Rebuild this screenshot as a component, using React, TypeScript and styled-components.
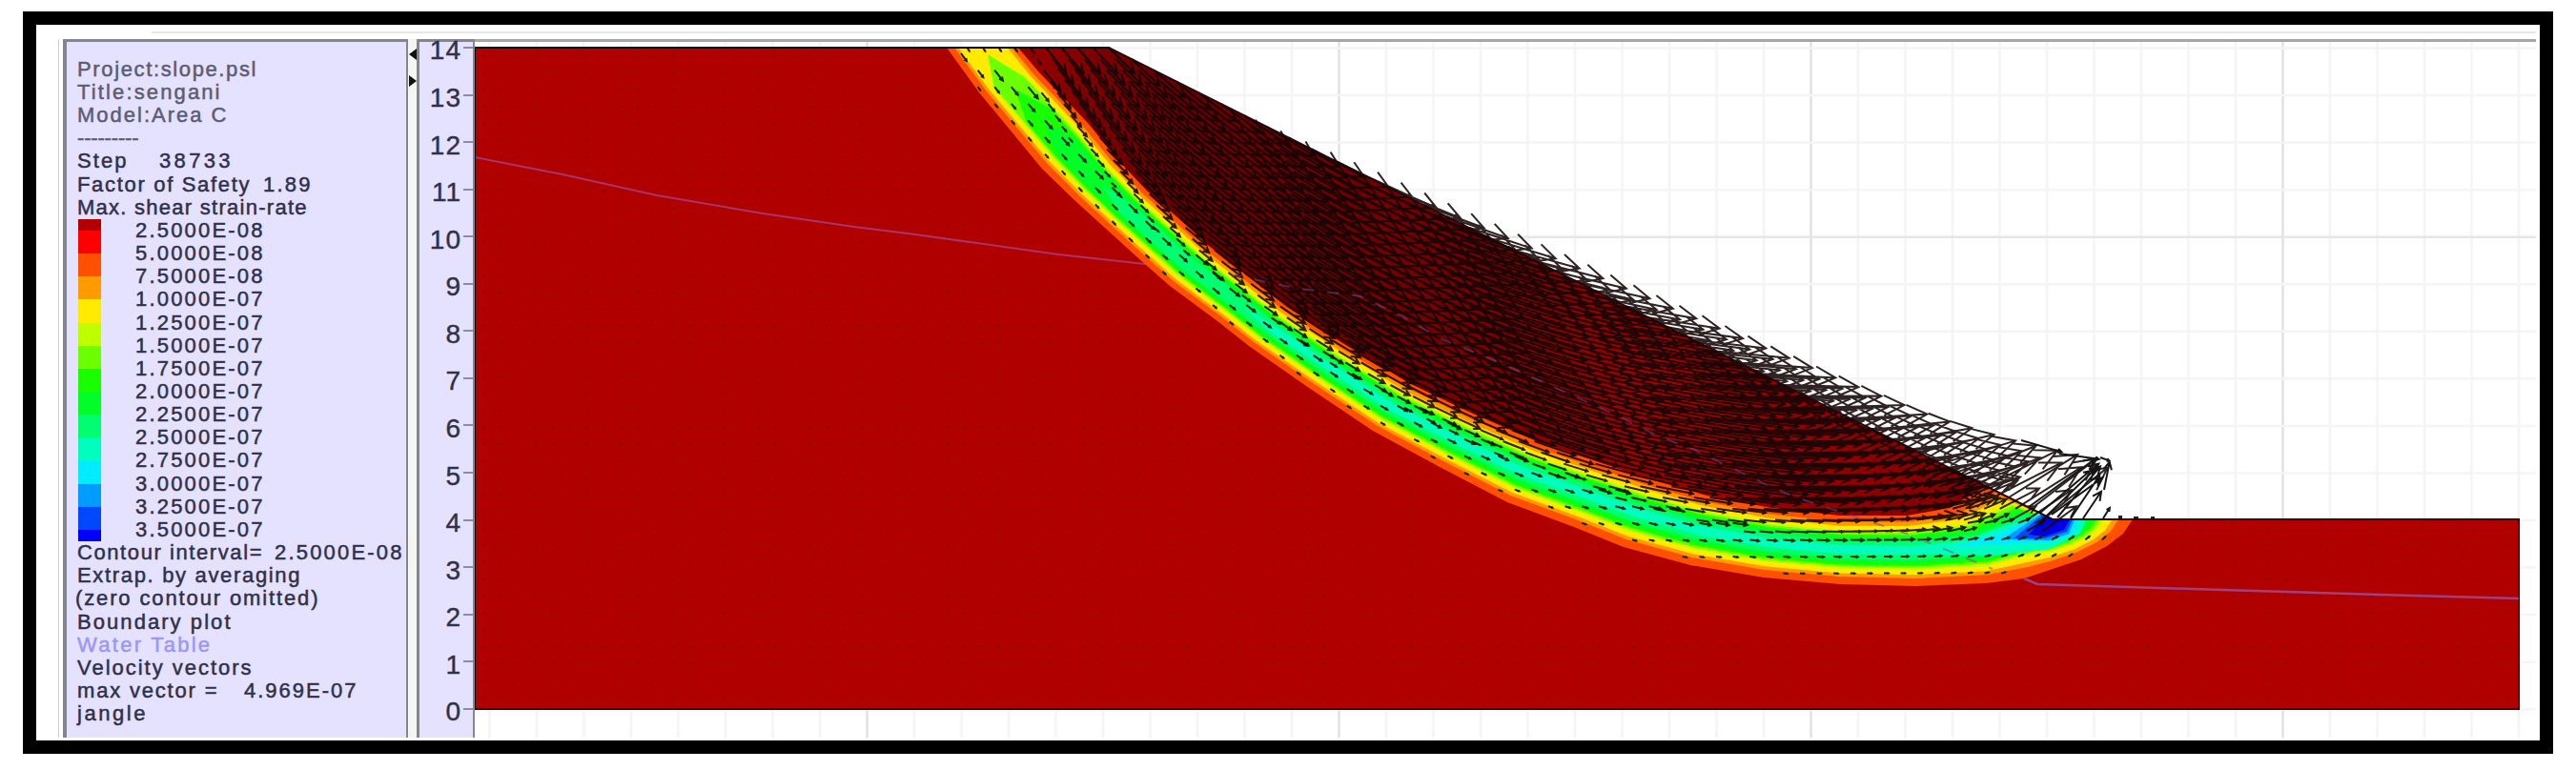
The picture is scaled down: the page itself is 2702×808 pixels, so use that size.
import React from 'react';
import styled, { createGlobalStyle } from 'styled-components';

const GlobalStyle = createGlobalStyle`
  body { margin: 0; background: #fff; font-family: "Liberation Sans", Arial, sans-serif; }
  * { box-sizing: border-box; }
`;

const LINE = 24.17;

const Page = styled.main`
  width: 2702px;
  height: 808px;
  padding: 12px 24px 17px;
  overflow: hidden;
`;
const Frame = styled.div`
  width: 2654px;
  height: 779px;
  border: 14px solid #000;
  padding: 7px 4px 3px 23px;
  display: flex;
  flex-direction: column;
  background: #fff;
`;
const TopRule = styled.div`
  height: 2px;
  margin-left: 98px;
  background: #e6e6e6;
  flex: none;
`;
const Panels = styled.div`
  display: flex;
  flex: 1;
  min-height: 0;
  margin-top: 6px;
  padding-left: 4px;
  border-left: 1px solid #cfcfc8;
`;
const Legend = styled.section`
  width: 362px;
  flex: none;
  padding: 16.8px 0 0 11px;
  border: solid #85858f;
  border-width: 3px 2px 0 4px;
  background: #e4e2ff;
  overflow: hidden;
`;
const Line = styled.div<{ $tone?: string; $shift?: number }>`
  display: flex;
  height: ${LINE}px;
  line-height: ${LINE}px;
  font-size: 22px;
  white-space: pre;
  color: ${(p) => p.$tone ?? '#30304a'};
  -webkit-text-stroke: 0.5px currentColor;
  margin-left: ${(p) => p.$shift ?? 0}px;
`;
const Word = styled.span<{ $gap?: number; $width: number; $spacing: number }>`
  display: block;
  flex: none;
  width: ${(p) => p.$width}px;
  margin-left: ${(p) => p.$gap ?? 0}px;
  letter-spacing: ${(p) => p.$spacing}px;
`;
const ScaleBlock = styled.div`
  display: flex;
  gap: 36px;
`;
const Swatches = styled.div`
  width: 24px;
  margin-left: 1px;
`;
const Swatch = styled.div<{ $color: string; $half: boolean }>`
  height: ${(p) => (p.$half ? LINE / 2 : LINE)}px;
  background: ${(p) => p.$color};
`;
const Splitter = styled.div`
  width: 9px;
  flex: none;
  display: flex;
  flex-direction: column;
  align-items: flex-end;
  gap: 16px;
  padding-top: 10px;
  background: #f5f5f1;
`;
const Arrow = styled.i<{ $dir: 'left' | 'right' }>`
  width: 0;
  height: 0;
  border: solid transparent;
  border-width: 6.5px 0;
  ${(p) => (p.$dir === 'left' ? 'border-right: 8px solid #111;' : 'border-left: 8px solid #111;')}
`;
const Axis = styled.section`
  width: 61px;
  flex: none;
  border: solid #85858f;
  border-width: 3px 2px 0 3px;
  background: #e4e2ff;
`;
const AxisRows = styled.div`
  margin-top: -18.8px;
`;
const AxisRow = styled.div`
  height: 49.57px;
  display: flex;
  align-items: center;
  justify-content: flex-end;
  gap: 2px;
  font-size: 28px;
  letter-spacing: 1px;
  color: #30304a;
  -webkit-text-stroke: 0.4px currentColor;
`;
const AxisLabel = styled.span`
  padding-top: 7px;
  line-height: 28px;
`;
const Tick = styled.span`
  width: 10px;
  height: 2px;
  background: #8c8ca4;
`;
const Plot = styled.section`
  flex: 1;
  border-top: 3px solid #a6a6a6;
`;
const Drawing = styled.svg`
  display: block;
`;

/* ---------- legend data ---------- */
const COLORS = [
  '#b00000', '#ff0000', '#ff5000', '#ff9a00', '#ffea00', '#beff00', '#6cff00', '#18ff00',
  '#00ff28', '#00ff70', '#00ffbe', '#00ecff', '#009cff', '#0048ff', '#0000ff',
];
const VALUES = [
  '2.5000E-08', '5.0000E-08', '7.5000E-08', '1.0000E-07', '1.2500E-07', '1.5000E-07', '1.7500E-07',
  '2.0000E-07', '2.2500E-07', '2.5000E-07', '2.7500E-07', '3.0000E-07', '3.2500E-07', '3.5000E-07',
];

const ruler = document.createElement('canvas').getContext('2d');
function spacingFor(text: string, width: number) {
  if (!ruler) return 0;
  ruler.font = '22px "Liberation Sans"';
  return (width + 1.5 - ruler.measureText(text).width) / (text.length - 1);
}
function Text({ t, w, gap }: { t: string; w: number; gap?: number }) {
  return <Word $width={w} $gap={gap} $spacing={spacingFor(t, w)}>{t}</Word>;
}

/* ---------- slope geometry ---------- */
type P = [number, number];
const LOWER: P[] = [
  [993, 50], [1027, 97], [1060, 137], [1093, 177], [1127, 210], [1160, 240], [1193, 270], [1227, 300],
  [1277, 337], [1310, 363], [1370, 405], [1440, 452], [1510, 490], [1581, 527], [1651, 553], [1703, 574],
  [1773, 593], [1850, 606], [1930, 613], [2010, 615], [2083, 612], [2123, 607], [2150, 598], [2183, 587],
  [2210, 573], [2227, 560], [2237, 545],
];
const UPPER: P[] = [
  [1068, 50], [1090, 76], [1118, 105], [1142, 130], [1170, 165], [1203, 200], [1235, 228], [1268, 258],
  [1318, 297], [1350, 322], [1410, 361], [1478, 402], [1545, 434], [1612, 463], [1680, 486], [1728, 502],
  [1790, 520], [1858, 533], [1930, 541], [2000, 541], [2045, 533], [2083, 510],
];
const mix = (a: P, b: P, f: number): P => [a[0] + (b[0] - a[0]) * f, a[1] + (b[1] - a[1]) * f];
const TOE_CORE: P[] = [[2085, 572], [2140, 552], [2155, 556], [2160, 554], [2165, 552], [2168, 549], [2170, 545]];
const CORE: P[] = LOWER.map((p, i) => (i < 20 ? mix(p, UPPER[i], 0.5) : TOE_CORE[i - 20]));

const path = (pts: P[], close = true) =>
  'M' + pts.map((p) => p.map((n) => n.toFixed(1)).join(' ')).join('L') + (close ? 'Z' : '');

const LEVELS: { color: string; low: number; up: number; from: number }[] = [
  { color: COLORS[2], low: 0, up: 0, from: 0 },
  { color: COLORS[3], low: 0.22, up: 0.18, from: 0 },
  { color: COLORS[4], low: 0.32, up: 0.3, from: 0 },
  { color: COLORS[5], low: 0.45, up: 0.43, from: 1 },
  { color: COLORS[6], low: 0.51, up: 0.49, from: 1 },
  { color: COLORS[7], low: 0.57, up: 0.55, from: 2 },
  { color: COLORS[8], low: 0.64, up: 0.62, from: 3 },
  { color: COLORS[9], low: 0.74, up: 0.72, from: 5 },
  { color: COLORS[10], low: 0.88, up: 0.86, from: 9 },
];
function band(low: number, up: number, from: number) {
  const a = LOWER.map((p, i) => mix(p, CORE[i], low)).slice(from);
  const b = UPPER.map((p, i) => mix(p, CORE[i], up)).slice(from);
  const tip = from > 0 ? [mix(CORE[from], CORE[from - 1], 0.8)] : [];
  return path([...tip, ...a, [2153, 545] as P, ...b.reverse()]);
}

const BODY = 'M498 50H1163L2153 545H2642V744H498Z';

/* ---------- velocity field ---------- */
function table(rows: P[], x: number) {
  if (x <= rows[0][0]) return rows[0][1];
  for (let i = 1; i < rows.length; i++) {
    if (x <= rows[i][0]) {
      const [x0, y0] = rows[i - 1];
      const [x1, y1] = rows[i];
      return y0 + ((y1 - y0) * (x - x0)) / (x1 - x0 || 1);
    }
  }
  return rows[rows.length - 1][1];
}
const SURFACE_ANGLE: P[] = [
  [1000, 60], [1163, 45], [1300, 34], [1400, 26], [1600, 15], [1850, 3], [1950, -4], [2030, -16], [2090, -28], [2150, -42], [2200, -50],
];
const BASE_ANGLE: P[] = [
  [1000, 54], [1150, 46], [1300, 38], [1500, 28], [1700, 15], [1850, 6], [1980, 0], [2080, -12], [2150, -28], [2230, -50],
];
const LENGTH: P[] = [[1000, 28], [1163, 38], [1350, 62], [1600, 72], [1850, 78], [2060, 82], [2150, 88]];

function arrow(x: number, y: number, len: number, deg: number, head = 0.3) {
  const t = (deg * Math.PI) / 180;
  const ex = x + len * Math.cos(t);
  const ey = y + len * Math.sin(t);
  const h = len * head;
  const barb = (s: number) =>
    `${(ex - h * Math.cos(t + s)).toFixed(1)} ${(ey - h * Math.sin(t + s)).toFixed(1)}`;
  return `M${x.toFixed(1)} ${y.toFixed(1)}L${ex.toFixed(1)} ${ey.toFixed(1)}M${barb(0.48)}L${ex.toFixed(1)} ${ey.toFixed(1)}L${barb(-0.44)}`;
}
function field() {
  let strong = '';
  let weak = '';
  for (let y = 50; y < 612; y += 11.8) {
    const edge = y < 545 ? 1163 + 2 * (y - 50) : 2225;
    for (let x = edge; x > 1000; x -= 16.5) {
      const lowY = table(LOWER, x);
      if (y > lowY - 4) break;
      const upY = table(UPPER, x);
      const top = x > 1163 ? 50 + (x - 1163) / 2 : 50;
      const thick = Math.max(30, lowY - upY);
      let f = Math.min(1, (lowY - y) / (thick * 1.15));
      if (x > 2030) f = Math.max(f, Math.min(1, 1.15 - (y - top) / 50));
      if (x < 1090) f *= 0.6;
      const d = Math.min(1, Math.max(0, (y - top) / Math.max(1, lowY - top)));
      const deg = table(SURFACE_ANGLE, x) * (1 - d) + table(BASE_ANGLE, x) * d;
      if (x > 2155) continue;
      const full = table(LENGTH, x);
      const open = x > 1540 && x < 2000 && y - top > 50;
      if (f > 0.5) strong += arrow(x, y, full * f * f * f, deg, open ? 0.12 : 0.3);
    }
  }
  for (let y = 56; y < 606; y += 17.6) {
    for (let x = 1008; x < 2226; x += 17.6) {
      const lowY = table(LOWER, x);
      const upY = table(UPPER, x);
      const f = (lowY - y) / Math.max(30, lowY - upY);
      if (y < 549 && x > 2150) continue;
      if (f < 0.08 || f > 0.72) continue;
      weak += arrow(x, y, 4 + 24 * f * f, table(BASE_ANGLE, x));
    }
  }
  return { strong, weak };
}
const FIELD = field();
const TOE_ARROWS = [
  arrow(2145, 543, 72, -44, 0.15), arrow(2158, 543, 70, -50, 0.15), arrow(2172, 544, 54, -56, 0.2), arrow(2185, 544, 34, -56),
  arrow(2207, 514, 30, -79), arrow(2206, 544, 13, -58), arrow(2140, 538, 80, -40, 0.15), arrow(2128, 532, 86, -36, 0.15),
  arrow(2160, 476, 42, 8, 0.1), arrow(2120, 462, 44, 16, 0.1), arrow(2203, 480, 10, 20), arrow(2152, 540, 66, -36, 0.15),
].join('');

const WATER: P[] = [
  [498, 165], [590, 183], [689, 205], [800, 224], [896, 238], [960, 246], [1110, 267], [1210, 278], [1290, 288],
  [1357, 302], [1427, 311], [1467, 330], [1510, 355], [1567, 378], [1623, 403], [1700, 438], [1740, 458],
  [1777, 472], [1860, 512], [1887, 523], [2000, 560], [2090, 597], [2123, 607], [2137, 613], [2300, 618],
  [2430, 622], [2530, 625], [2642, 628],
];

function SlopePlot() {
  const cols = Array.from({ length: 44 }, (_, i) => i);
  return (
    <Drawing width={2162} height={730} viewBox="498 44 2162 730">
      <defs>
        <clipPath id="body"><path d={BODY} /></clipPath>
        <pattern id="nodes" x="498" y="50" width="18" height="17.7" patternUnits="userSpaceOnUse">
          <rect x="8" y="8" width="3" height="2" fill="#8c0000" />
        </pattern>
        <linearGradient id="shade" gradientUnits="userSpaceOnUse" x1="1100" y1="0" x2="2080" y2="0">
          <stop offset="0" stopColor="#300000" stopOpacity="0.25" />
          <stop offset="0.12" stopColor="#300000" stopOpacity="0.6" />
          <stop offset="0.45" stopColor="#300000" stopOpacity="0.45" />
          <stop offset="0.65" stopColor="#300000" stopOpacity="0.1" />
          <stop offset="1" stopColor="#300000" stopOpacity="0.35" />
        </linearGradient>
      </defs>
      {cols.map((i) => {
        const x = 2642 - i * 49.5;
        return <path key={i} d={`M${x} 44V774`} stroke={i % 10 === 5 ? '#e2e2e2' : '#f4f4f4'} strokeWidth="2.5" />;
      })}
      {Array.from({ length: 15 }, (_, i) => (
        <path key={i} d={`M498 ${50.5 + i * 49.55}H2660`} stroke={i === 4 ? '#e6e6e6' : '#f5f5f5'} strokeWidth="2.5" />
      ))}
      <path d={BODY} fill="#b00000" />
      <path d={BODY} fill="url(#nodes)" opacity="0.7" />
      <path d={path(WATER.slice(0, 8), false)} fill="none" stroke="#a83468" strokeWidth="2" />
      <g clipPath="url(#body)">
        {LEVELS.map((l) => <path key={l.color} d={band(l.low, l.up, l.from)} fill={l.color} />)}
        <path d="M1985 581L2060 567L2137 540L2190 540L2182 560L2150 576L2090 583Z" fill="#00ffbe" />
        <path d="M2050 573L2100 558L2140 540L2182 540L2176 560L2150 569L2090 572Z" fill="#00ecff" />
        <path d="M2100 566L2140 540L2178 540L2170 560L2150 567Z" fill="#009cff" />
        <path d="M2112 565L2142 540L2176 540L2168 558L2145 565Z" fill="#0048ff" />
        <path d="M2128 561L2146 540L2174 540L2165 556L2145 563Z" fill="#0000e0" />
        <path d={path([[1068, 50], [1163, 50], [2083, 510], ...UPPER.slice().reverse()])} fill="url(#shade)" />
      </g>
      <path d={FIELD.weak} fill="none" stroke="#0a2a08" strokeWidth="2" />
      <path d={FIELD.strong} fill="none" stroke="#120404" strokeWidth="2" opacity="0.88" />
      <path d={TOE_ARROWS} fill="none" stroke="#161616" strokeWidth="2" />
      <path d="M2222 541h4v4h-4zM2238 542h5v3h-5zM2256 542h4v3h-4z" fill="#222" />
      <path d={BODY} fill="none" stroke="#1c0808" strokeWidth="2" />
      <path d={path(WATER.slice(8, 22), false)} fill="none" stroke="#7a4a98" strokeWidth="2" strokeDasharray="12 14" opacity="0.5" />
      <path d={path(WATER.slice(22), false)} fill="none" stroke="#a04080" strokeWidth="2.5" />
    </Drawing>
  );
}

export default function App() {
  return (
    <>
      <GlobalStyle />
      <Page>
        <Frame>
          <TopRule />
          <Panels>
            <Legend>
              <Line $tone="#5c5c74"><Text t="Project:slope.psl" w={186} /></Line>
              <Line $tone="#5c5c74"><Text t="Title:sengani" w={148} /></Line>
              <Line $tone="#5c5c74"><Text t="Model:Area C" w={155} /></Line>
              <Line $tone="#5c5c74"><Text t="---------" w={63} /></Line>
              <Line><Text t="Step" w={50} /><Text t="38733" w={73} gap={36} /></Line>
              <Line><Text t="Factor of Safety" w={179} /><Text t="1.89" w={48} gap={16} /></Line>
              <Line><Text t="Max. shear strain-rate" w={239} /></Line>
              <ScaleBlock>
                <Swatches>
                  {COLORS.map((c, i) => <Swatch key={c} $color={c} $half={i === 0 || i === COLORS.length - 1} />)}
                </Swatches>
                <div>
                  {VALUES.map((v) => <Line key={v}><Text t={v} w={132} /></Line>)}
                </div>
              </ScaleBlock>
              <Line><Text t="Contour interval=" w={192} /><Text t="2.5000E-08" w={132} gap={15} /></Line>
              <Line><Text t="Extrap. by averaging" w={232} /></Line>
              <Line $shift={-2}><Text t="(zero contour omitted)" w={253} /></Line>
              <Line><Text t="Boundary plot" w={159} /></Line>
              <Line $tone="#9c96f4"><Text t="Water Table" w={138} /></Line>
              <Line><Text t="Velocity vectors" w={181} /></Line>
              <Line><Text t="max vector =" w={145} /><Text t="4.969E-07" w={116} gap={30} /></Line>
              <Line><Text t="jangle" w={70} /></Line>
            </Legend>
            <Splitter>
              <Arrow $dir="left" />
              <Arrow $dir="right" />
            </Splitter>
            <Axis>
              <AxisRows>
                {Array.from({ length: 15 }, (_, i) => (
                  <AxisRow key={i}>
                    <AxisLabel>{14 - i}</AxisLabel>
                    <Tick />
                  </AxisRow>
                ))}
              </AxisRows>
            </Axis>
            <Plot>
              <SlopePlot />
            </Plot>
          </Panels>
        </Frame>
      </Page>
    </>
  );
}
